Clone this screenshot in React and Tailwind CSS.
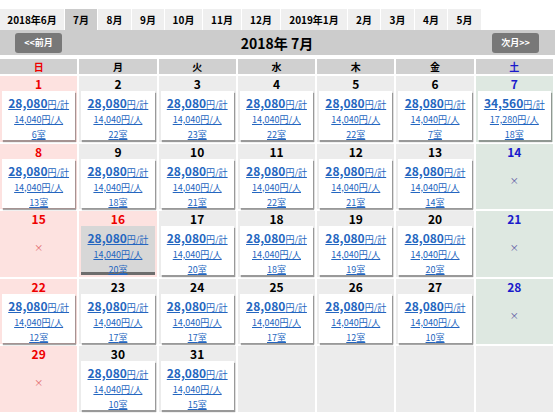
import React from "react";

const tabs = [
  { label: "2018年6月", w: "w-[64px]" },
  { label: "7月", w: "w-[32px]", active: true },
  { label: "8月", w: "w-[33px]" },
  { label: "9月", w: "w-[32px]" },
  { label: "10月", w: "w-[37px]" },
  { label: "11月", w: "w-[38px]" },
  { label: "12月", w: "w-[38px]" },
  { label: "2019年1月", w: "w-[66px]" },
  { label: "2月", w: "w-[32px]" },
  { label: "3月", w: "w-[33px]" },
  { label: "4月", w: "w-[32px]" },
  { label: "5月", w: "w-[33px]" },
];

const dows = ["日", "月", "火", "水", "木", "金", "土"];

const rooms = {
  1: 6, 2: 22, 3: 23, 4: 22, 5: 22, 6: 7, 7: 18,
  8: 13, 9: 18, 10: 21, 11: 22, 12: 21, 13: 14,
  16: 20, 17: 20, 18: 18, 19: 19, 20: 20,
  22: 12, 23: 17, 24: 17, 25: 17, 26: 12, 27: 10,
  30: 10, 31: 15,
};

const holidays = [16];

function Cell({ day, col }) {
  if (!day) {
    return <div className="h-[65.5px] bg-[#ececec]" />;
  }
  const sun = col === 0 || holidays.includes(day);
  const sat = col === 6;
  const bg = sun ? "bg-[#fde2e0]" : sat ? "bg-[#dee8e1]" : "bg-[#ececec]";
  const numColor = sun ? "text-[#ee0000]" : sat ? "text-[#1a1acc]" : "text-black";
  const r = rooms[day];
  const selected = day === 16;
  const price = sat ? "34,560" : "28,080";
  const per = sat ? "17,280" : "14,040";
  return (
    <div className={`h-[65.5px] ${bg} flex flex-col`}>
      <div className={`h-[15px] leading-[15px] text-center text-[12px] font-bold ${numColor}`}>{day}</div>
      {r ? (
        <div
          className={`mx-[2px] h-[49px] flex flex-col items-center pt-[3px] ${
            selected
              ? "bg-[#d7d7d7] border-b-[3px] border-[#6d6d6d]"
              : "bg-white shadow-[1px_2px_1px_rgba(0,0,0,0.35)]"
          }`}
        >
          <div className="leading-[15px] text-[#2466c0] underline whitespace-nowrap">
            <span className="text-[12px] font-bold">{price}</span>
            <span className="text-[9px]">円/計</span>
          </div>
          <div className="leading-[15px] text-[9px] text-[#2466c0] underline whitespace-nowrap">{per}円/人</div>
          <div className="leading-[15px] text-[9px] text-[#2466c0] underline whitespace-nowrap">{r}室</div>
        </div>
      ) : (
        <div className={`h-[44px] flex items-center justify-center text-[9px] ${sun ? "text-[#e06060]" : "text-[#5050a0]"}`}>
          ×
        </div>
      )}
    </div>
  );
}

export default function App() {
  const cells = [];
  for (let i = 0; i < 35; i++) {
    const d = i + 1;
    cells.push({ day: d <= 31 ? d : null, col: i % 7 });
  }
  return (
    <div
      className="w-[559px] h-[414px] bg-white overflow-hidden"
      style={{ fontFamily: '"Noto Sans CJK JP", "Noto Sans", sans-serif' }}
    >
      <div className="pt-[9px] flex h-[30px]">
        {tabs.map((t) => (
          <div
            key={t.label}
            className={`${t.w} mr-[1px] h-[21px] flex items-center justify-center text-[10px] font-bold text-black ${
              t.active ? "bg-[#cccccc]" : "bg-[#efefef]"
            }`}
          >
            {t.label}
          </div>
        ))}
      </div>
      <div className="w-[555px] h-[25px] bg-[#cccccc] flex items-center justify-between pl-[15px] pr-[16px]">
        <div className="w-[47px] h-[20px] rounded-[3px] bg-[#787878] text-white text-[9px] font-bold flex items-center justify-center">
          &lt;&lt;前月
        </div>
        <div className="text-[14px] font-bold text-black leading-none">2018年 7月</div>
        <div className="w-[47px] h-[20px] rounded-[3px] bg-[#787878] text-white text-[9px] font-bold flex items-center justify-center">
          次月&gt;&gt;
        </div>
      </div>
      <div className="mt-[4px] w-[553px] grid grid-cols-7 gap-x-[2px] gap-y-[2px]">
        {dows.map((d, i) => (
          <div
            key={d}
            className={`h-[15px] leading-[15px] bg-[#d0d0d0] text-center text-[10px] font-bold ${
              i === 0 ? "text-[#ee0000]" : i === 6 ? "text-[#1a1acc]" : "text-black"
            }`}
          >
            {d}
          </div>
        ))}
        {cells.map((c, i) => (
          <Cell key={i} day={c.day} col={c.col} />
        ))}
      </div>
    </div>
  );
}
